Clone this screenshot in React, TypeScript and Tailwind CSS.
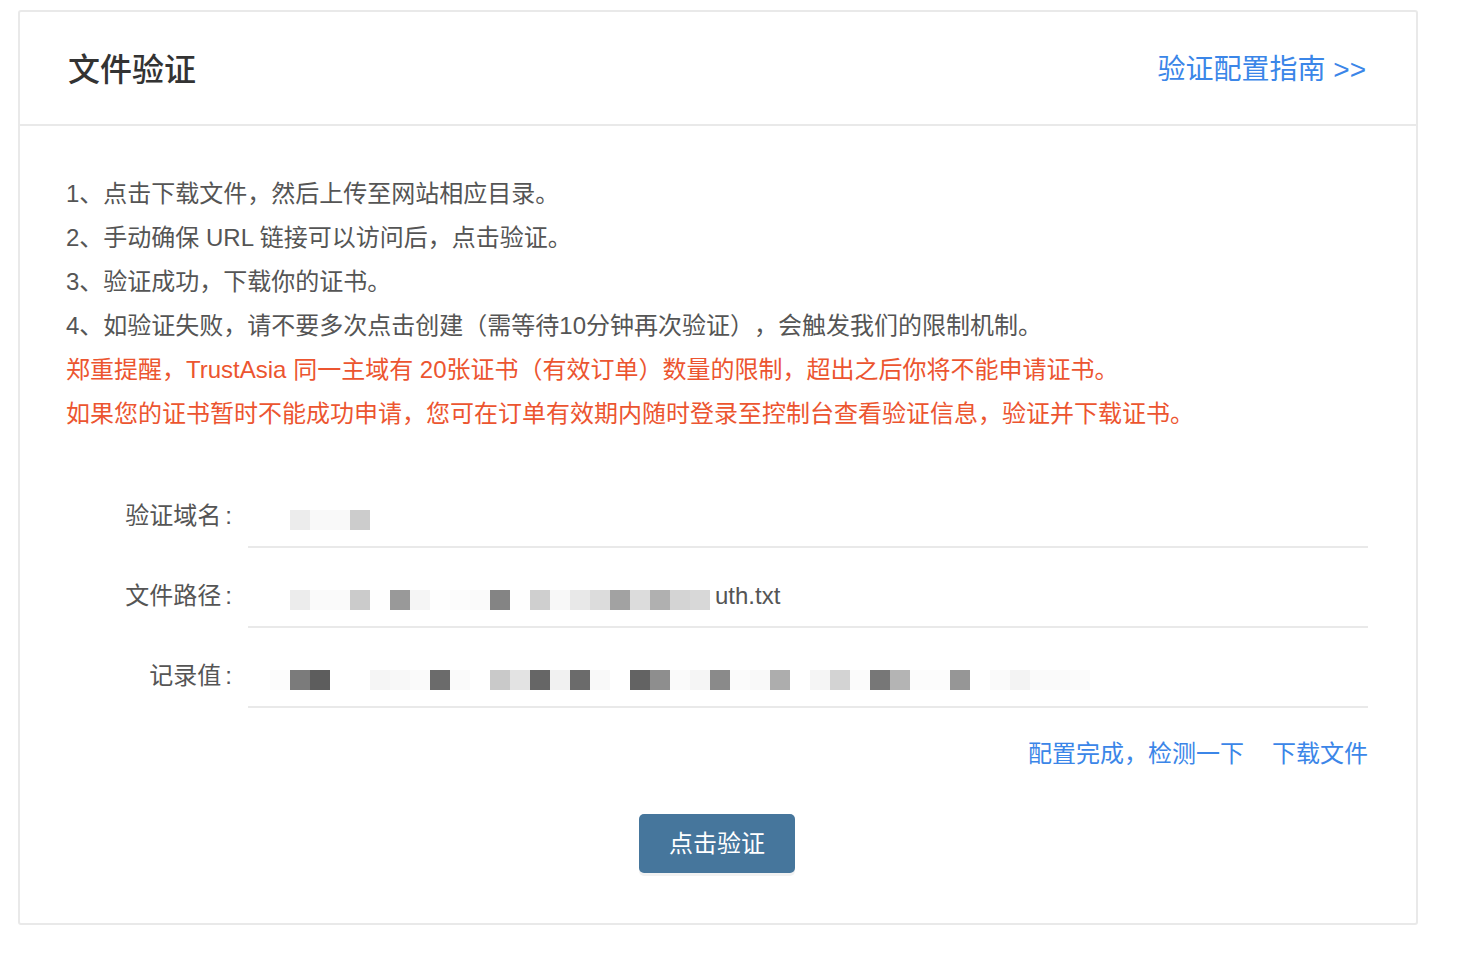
import React from "react";

// redacted (pixelated) values, one 20px cell per colour, starting at the value's left edge
const domainCells = ["#ffffff", "#ececec", "#f9f9f9", "#f9f9f9", "#cccccc"];

const pathCells = [
  "#ffffff", "#ececec", "#fafafa", "#fafafa", "#cbcbcb", "#fefefe", "#999999", "#f5f5f5",
  "#fefefe", "#fcfcfc", "#fafafa", "#848484", "#fefefe", "#cfcfcf", "#f8f8f8", "#e8e8e8",
  "#dcdcdc", "#a2a2a2", "#dcdcdc", "#b0b0b0", "#d4d4d4", "#d8d8d8",
];

const recordCells = [
  "#fcfcfc", "#7b7b7b", "#5d5d5d", "#ffffff", "#ffffff", "#f5f5f5", "#f8f8f8", "#fafafa",
  "#6b6b6b", "#fafafa", "#ffffff", "#c9c9c9", "#e3e3e3", "#666666", "#f1f1f1", "#6b6b6b",
  "#f9f9f9", "#ffffff", "#636363", "#8e8e8e", "#fafafa", "#f5f5f5", "#8a8a8a", "#fbfbfb",
  "#f9f9f9", "#adadad", "#ffffff", "#f5f5f5", "#d3d3d3", "#fbfbfb", "#777777", "#b4b4b4",
  "#fcfcfc", "#fcfcfc", "#969696", "#ffffff", "#fafafa", "#f3f3f3", "#fafafa", "#fafafa",
  "#fbfbfb",
];

function Mosaic({ cells }: { cells: string[] }) {
  return (
    <svg width={cells.length * 20} height={20} className="mt-[14px] shrink-0">
      {cells.map((c, i) => (
        <rect key={i} x={i * 20} y={0} width={20} height={20} fill={c} />
      ))}
    </svg>
  );
}

function Row({ label, children }: { label: string; children: React.ReactNode }) {
  return (
    <div className="flex items-end h-[80px]">
      <div className="w-[182px] pr-[16px] pb-[12px] text-right leading-[40px] text-[#555]">
        {label}
        <span className="ml-[4px]">:</span>
      </div>
      <div className="flex-1 flex items-start h-[52px] pl-[22px] pb-[10px] border-b-2 border-[#e9e9e9]">
        {children}
      </div>
    </div>
  );
}

export default function App() {
  return (
    <main className="min-h-screen bg-white pt-[10px] pl-[18px] font-['Liberation_Sans','Noto_Sans_CJK_SC',sans-serif] [text-spacing-trim:space-all]">
      <div className="w-[1400px] border-2 border-[#e9e9e9] rounded-[3px]">
        <div className="h-[114px] pt-[4px] pl-[48px] pr-[50px] flex items-center justify-between border-b-2 border-[#e9e9e9]">
          <h1 className="text-[32px] font-medium text-[#333]">文件验证</h1>
          <a className="text-[28px] text-[#3b86e8]">验证配置指南 &gt;&gt;</a>
        </div>

        <div className="pl-[46px] pr-[48px] pt-[46px] pb-[50px]">
          <div className="text-[24px] leading-[44px]">
            <p className="text-[#555]">1、点击下载文件，然后上传至网站相应目录。</p>
            <p className="text-[#555]">2、手动确保 URL 链接可以访问后，点击验证。</p>
            <p className="text-[#555]">3、验证成功，下载你的证书。</p>
            <p className="text-[#555]">4、如验证失败，请不要多次点击创建（需等待10分钟再次验证），会触发我们的限制机制。</p>
            <p className="text-[#ec5530]">郑重提醒，TrustAsia 同一主域有 20张证书（有效订单）数量的限制，超出之后你将不能申请证书。</p>
            <p className="text-[#ec5530]">如果您的证书暂时不能成功申请，您可在订单有效期内随时登录至控制台查看验证信息，验证并下载证书。</p>
          </div>

          <div className="mt-[32px] text-[24px]">
            <Row label="验证域名">
              <Mosaic cells={domainCells} />
            </Row>
            <Row label="文件路径">
              <Mosaic cells={pathCells} />
              <span className="ml-[5px] leading-[40px] text-[#555]">uth.txt</span>
            </Row>
            <Row label="记录值">
              <Mosaic cells={recordCells} />
            </Row>
          </div>

          <div className="mt-[24px] flex justify-end gap-[28px] text-[24px] leading-[44px] text-[#3b86e8]">
            <a>配置完成，检测一下</a>
            <a>下载文件</a>
          </div>

          <div className="mt-[38px] flex justify-center">
            <button className="w-[156px] h-[59px] rounded-[5px] bg-[#46769c] text-white text-[24px] shadow-[0_3px_0_#f2f2f2]">
              点击验证
            </button>
          </div>
        </div>
      </div>
    </main>
  );
}
